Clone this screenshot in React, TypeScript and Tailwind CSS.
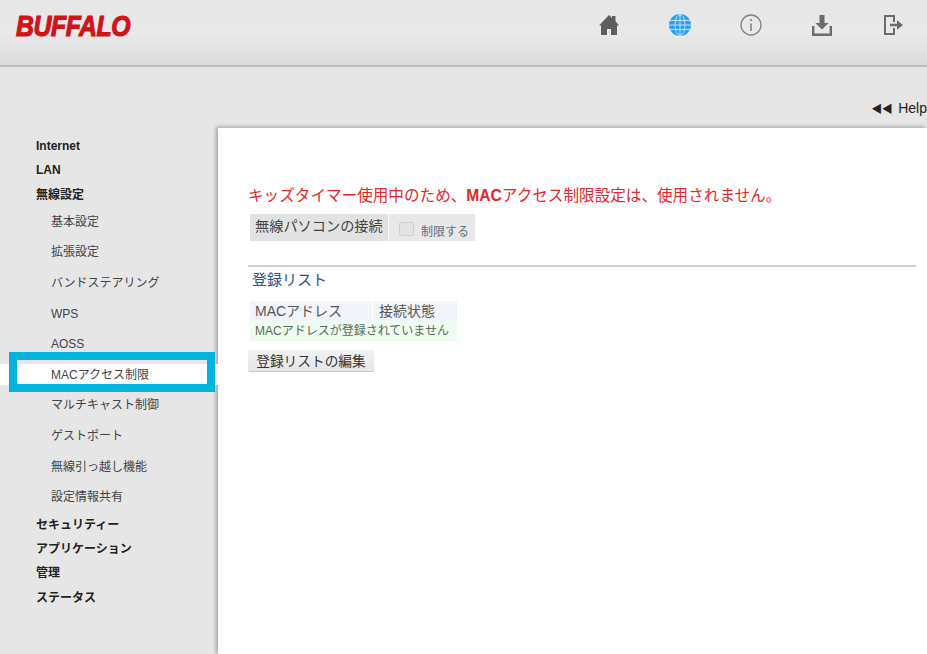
const font = { fontFamily: '"Liberation Sans", "Noto Sans CJK JP", sans-serif' };

function Top({ label }: { label: string }) {
  return <div className="pl-9 text-[12px] leading-[24.3px] h-[24.3px] font-bold text-[#222]">{label}</div>;
}

function Sub({ label, active }: { label: string; active?: boolean }) {
  return (
    <div className="relative pl-[51px] h-[30.6px] leading-[30.6px] text-[12px] text-[#444]">
      {active && <div className="absolute left-0 right-0 top-[4px] h-[21px] bg-white" />}
      <span className="relative">{label}</span>
      {active && <div className="absolute left-[9px] top-[-8px] w-[206px] h-[40px] border-[8px] border-[#00b4dc]" />}
    </div>
  );
}

function HomeIcon() {
  return (
    <svg width="22" height="22" viewBox="0 0 22 22" fill="#5e5e5e">
      <path d="M11 1 14 3.8V2h3.5v5.2L21 11.5h-2V21h-6v-6H9v6H3v-9.5H1z" />
    </svg>
  );
}

function GlobeIcon() {
  return (
    <svg width="22" height="22" viewBox="0 0 22 22">
      <circle cx="11" cy="11" r="11" fill="#2d9ff0" />
      <g fill="none" stroke="#cfe6f7" strokeWidth="0.9">
        <ellipse cx="11" cy="11" rx="5" ry="10.5" />
        <path d="M11 0v22M1 6.5h20M0 11h22M1 15.5h20" />
      </g>
    </svg>
  );
}

function InfoIcon() {
  return (
    <svg width="22" height="22" viewBox="0 0 22 22" fill="none" stroke="#808080" strokeWidth="1.3">
      <circle cx="11" cy="11" r="10" />
      <path d="M11 9.5v7.5" strokeWidth="1.6" />
      <circle cx="11" cy="6" r="0.8" fill="#808080" strokeWidth="0.8" />
    </svg>
  );
}

function DownloadIcon() {
  return (
    <svg width="22" height="22" viewBox="0 0 22 22" fill="#6b6b6b">
      <path d="M8.5 1h5v8h4.2L11 15.5 4.3 9h4.2z" />
      <path d="M1 12h2.4v7.4h15.2V12H21v10H1z" />
    </svg>
  );
}

function LogoutIcon() {
  return (
    <svg width="22" height="22" viewBox="0 0 22 22" fill="#6b6b6b">
      <path d="M2 1h11v7h-2V3H4v16h7v-5h2v7H2z" />
      <path d="M8 9.7h7V6.2l6 4.8-6 4.8v-3.5H8z" />
    </svg>
  );
}

export default function App() {
  return (
    <div className="w-[927px] h-[654px] overflow-hidden bg-[#e6e6e6] flex flex-col" style={font}>
      <header className="h-[67px] shrink-0 flex items-start bg-gradient-to-b from-[#e6e6e6] via-[#e9e9e9] to-[#dcdcdc] border-b-2 border-[#bdbdbd]">
        <div className="ml-[16px] mt-[7px] text-[#d01318] text-[30px] leading-[38px] font-bold italic tracking-[-0.5px] origin-left scale-x-[0.825] [-webkit-text-stroke:1.2px_#d01318]">BUFFALO</div>
        <nav className="ml-auto mt-[14px] mr-[23px] flex gap-[49px]">
          <HomeIcon />
          <GlobeIcon />
          <InfoIcon />
          <DownloadIcon />
          <LogoutIcon />
        </nav>
      </header>
      <div className="h-[61px] shrink-0 flex justify-end items-end pb-[11px] text-[14px] leading-[16px] text-[#222]">
        <span className="whitespace-nowrap"><span className="text-[11px] tracking-[-0.5px] mr-[6px]">◀◀</span>Help</span>
      </div>
      <div className="flex flex-1 min-h-0">
        <aside className="w-[218px] shrink-0 pt-[6px]">
          <Top label="Internet" />
          <Top label="LAN" />
          <Top label="無線設定" />
          <div>
            <Sub label="基本設定" />
            <Sub label="拡張設定" />
            <Sub label="バンドステアリング" />
            <Sub label="WPS" />
            <Sub label="AOSS" />
            <Sub label="MACアクセス制限" active />
            <Sub label="マルチキャスト制御" />
            <Sub label="ゲストポート" />
            <Sub label="無線引っ越し機能" />
            <Sub label="設定情報共有" />
          </div>
          <div>
            <Top label="セキュリティー" />
            <Top label="アプリケーション" />
            <Top label="管理" />
            <Top label="ステータス" />
          </div>
        </aside>
        <main className="flex-1 bg-white shadow-[-2px_-1px_4px_rgba(0,0,0,0.3)] pl-[30px] pr-[11px] pt-[58px]">
          <p className="text-[15.6px] leading-[20px] text-[#e8262a] whitespace-nowrap">
            キッズタイマー使用中のため、<b>MAC</b>アクセス制限設定は、使用されません。
          </p>
          <div className="mt-[8px] ml-[2px] flex gap-[1px] h-[27px]">
            <div className="w-[138px] bg-[#e2e2e2] text-[14.2px] leading-[25px] pl-[5px] text-[#444] whitespace-nowrap">無線パソコンの接続</div>
            <div className="w-[86px] bg-[#e8e8e8] flex items-start pl-[10px] pt-[8px] gap-[7px]">
              <span className="w-[15px] h-[14px] rounded-[2px] border border-[#cfcfcf] bg-[#e4e4e4]" />
              <span className="text-[12px] leading-[16px] mt-[2px] text-[#5f6f85]">制限する</span>
            </div>
          </div>
          <div className="mt-[24px] border-t-2 border-[#d0d0d0]" />
          <h2 className="mt-[2px] ml-[4px] text-[15px] leading-[22px] font-normal text-[#2d5288]">登録リスト</h2>
          <table className="mt-[10px] ml-[2px] border-separate border-spacing-0 text-[#555]">
            <tbody>
              <tr className="bg-[#f2f4fc] text-[14px] leading-[19px]">
                <td className="w-[123px] pl-[5px] pr-[2px] h-[20px] border-r border-white">MACアドレス</td>
                <td className="w-[84px] pl-[6px] h-[20px]">接続状態</td>
              </tr>
              <tr className="bg-[#eefbee] text-[12px] leading-[20px] text-[#5a6a5a]">
                <td colSpan={2} className="pl-[5px] h-[20px] whitespace-nowrap">MACアドレスが登録されていません</td>
              </tr>
            </tbody>
          </table>
          <button className="mt-[9px] block w-[126px] h-[22px] pt-[2px] bg-gradient-to-b from-[#f2f2f2] to-[#e6e6e6] border-b border-[#c8c8c8] rounded-[2px] text-[13.7px] leading-[20px] text-[#333] whitespace-nowrap">登録リストの編集</button>
        </main>
      </div>
    </div>
  );
}
